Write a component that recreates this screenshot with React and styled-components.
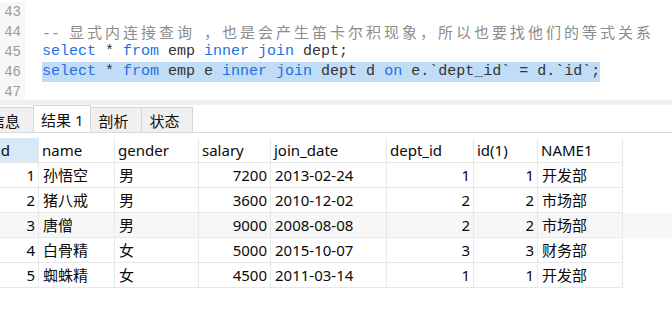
import React from "react";
import styled, { createGlobalStyle } from "styled-components";

const Global = createGlobalStyle`
  html, body { margin: 0; padding: 0; background: #fff; }
  body { width: 672px; height: 336px; overflow: hidden; }
`;

const Page = styled.div`
  width: 672px;
  height: 336px;
  overflow: hidden;
  background: #fff;
  display: flex;
  flex-direction: column;
`;

const Editor = styled.div`
  height: 100px;
  flex: none;
  padding-top: 2px;
  box-sizing: border-box;
  display: flex;
  flex-direction: column;
  background: #fff;
  overflow: hidden;
`;

const Line = styled.div`
  display: flex;
  height: 20px;
  flex: none;
`;

const Gutter = styled.div`
  width: 25px;
  flex: none;
  background: #f7f7f7;
  color: #9a9a9a;
  font-family: "Liberation Mono", monospace;
  font-size: 14px;
  line-height: 20px;
  text-align: right;
  padding-right: 4px;
  box-sizing: border-box;
`;

const Code = styled.div`
  padding-left: 17px;
  font-family: "Liberation Mono", "Noto Sans CJK SC", monospace;
  font-size: 15px;
  line-height: 20px;
  white-space: pre;
  color: #333;
`;

const Sel = styled.span`
  display: inline-block;
  height: 20px;
  background: ${(p) => (p.$on ? "#c1dcf6" : "transparent")};
`;

const Kw = styled.span`
  color: #1f70e6;
`;

const Comment = styled.span`
  color: #8c8c8c;
`;

const Cjk = styled.span`
  font-family: "Noto Sans CJK SC", sans-serif;
  letter-spacing: 3px;
`;

const Splitter = styled.div`
  height: 5px;
  flex: none;
  background: #f0f0f0;
`;

const TabBar = styled.div`
  height: 28px;
  flex: none;
  display: flex;
  align-items: flex-end;
  border-bottom: 1px solid #dadada;
  box-sizing: border-box;
  margin-bottom: 5px;
  overflow: hidden;
`;

const TabStrip = styled.div`
  display: flex;
  align-items: flex-end;
  margin-left: -17px;
  height: 100%;
`;

const Tab = styled.div`
  min-width: 52px;
  box-sizing: border-box;
  padding: 0 7px;
  height: ${(p) => (p.$active ? "28px" : "25px")};
  margin-bottom: ${(p) => (p.$active ? "-1px" : "0")};
  background: ${(p) => (p.$active ? "#fff" : "#f0f0f0")};
  border: 1px solid #d6d6d6;
  border-bottom: ${(p) => (p.$active ? "none" : "0")};
  margin-left: -1px;
  display: flex;
  align-items: center;
  font-family: "Noto Sans", "Noto Sans CJK SC", sans-serif;
  font-size: 15px;
  color: #111;
  white-space: pre;
  position: relative;
  z-index: ${(p) => (p.$active ? 1 : 0)};
`;

const TableWrap = styled.div`
  overflow: hidden;
  flex: 1;
`;

const Table = styled.div`
  margin-left: -6px;
  display: flex;
  flex-direction: column;
  font-family: "Noto Sans", "Noto Sans CJK SC", sans-serif;
  font-size: 15px;
  color: #0a0a0a;
`;

const COLS = "45px 76px 84px 72px 116px 87px 64px 85px";

const Row = styled.div`
  display: grid;
  grid-template-columns: ${COLS};
  height: 25px;
  background: ${(p) => (p.$shade ? "#f7f7f7" : "transparent")};
`;

const Cell = styled.div`
  box-sizing: border-box;
  border-right: 1px solid #e8e8e8;
  border-bottom: 1px solid #e8e8e8;
  padding: 0 3px 0 4px;
  display: flex;
  align-items: center;
  justify-content: ${(p) => (p.$right ? "flex-end" : "flex-start")};
  background: ${(p) => (p.$sel ? "#d9e8f6" : "transparent")};
  white-space: nowrap;
  overflow: hidden;
  line-height: 24px;
`;

const HeadCell = styled(Cell)`
  padding-left: 3px;
`;

const headers = ["id", "name", "gender", "salary", "join_date", "dept_id", "id(1)", "NAME1"];
const rows = [
  [1, "孙悟空", "男", 7200, "2013-02-24", 1, 1, "开发部"],
  [2, "猪八戒", "男", 3600, "2010-12-02", 2, 2, "市场部"],
  [3, "唐僧", "男", 9000, "2008-08-08", 2, 2, "市场部"],
  [4, "白骨精", "女", 5000, "2015-10-07", 3, 3, "财务部"],
  [5, "蜘蛛精", "女", 4500, "2011-03-14", 1, 1, "开发部"],
];
const rightCols = [0, 3, 5, 6];

export default function App() {
  return (
    <Page>
      <Global />
      <Editor>
        <Line>
          <Gutter>43</Gutter>
          <Code />
        </Line>
        <Line>
          <Gutter>44</Gutter>
          <Code>
            <Comment>
              {"-- "}
              <Cjk>显式内连接查询</Cjk>
              {" "}
              <Cjk>，也是会产生笛卡尔积现象，所以也要找他们的等式关系</Cjk>
            </Comment>
          </Code>
        </Line>
        <Line>
          <Gutter>45</Gutter>
          <Code>
            <Kw>select</Kw> * <Kw>from</Kw> emp <Kw>inner</Kw> <Kw>join</Kw> dept;
          </Code>
        </Line>
        <Line>
          <Gutter>46</Gutter>
          <Code>
            <Sel $on>
              <Kw>select</Kw> * <Kw>from</Kw> emp e <Kw>inner</Kw> <Kw>join</Kw> dept d <Kw>on</Kw> e.`dept_id` = d.`id`;
            </Sel>
          </Code>
        </Line>
        <Line>
          <Gutter>47</Gutter>
          <Code />
        </Line>
      </Editor>
      <Splitter />
      <TabBar>
        <TabStrip>
          <Tab>信息</Tab>
          <Tab $active>结果 1</Tab>
          <Tab>剖析</Tab>
          <Tab>状态</Tab>
        </TabStrip>
      </TabBar>
      <TableWrap>
        <Table>
          <Row>
            {headers.map((h, i) => (
              <HeadCell key={h} $sel={i === 0}>
                {h}
              </HeadCell>
            ))}
          </Row>
          {rows.map((r, ri) => (
            <Row key={ri} $shade={ri === 2}>
              {r.map((v, ci) => (
                <Cell key={ci} $right={rightCols.includes(ci)}>
                  {v}
                </Cell>
              ))}
            </Row>
          ))}
        </Table>
      </TableWrap>
    </Page>
  );
}
